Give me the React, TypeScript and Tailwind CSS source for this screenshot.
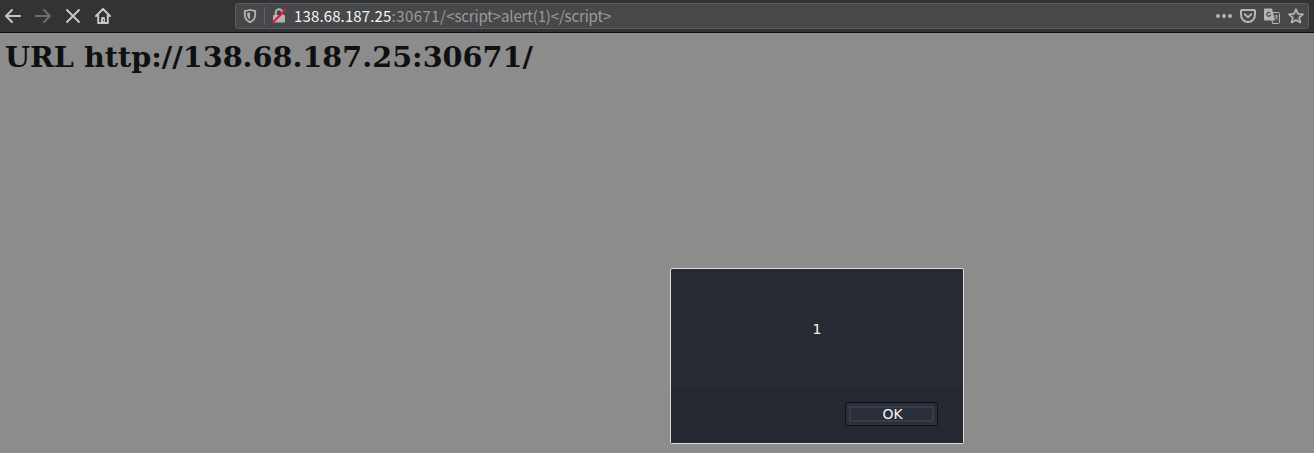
import React from "react";

const stroke = {
  fill: "none",
  stroke: "currentColor",
  strokeWidth: 2,
  strokeLinecap: "round" as const,
  strokeLinejoin: "round" as const,
};

function Icon({ children, className = "" }: { children: React.ReactNode; className?: string }) {
  return (
    <svg viewBox="0 0 16 16" className={`size-4 shrink-0 ${className}`} aria-hidden="true">
      {children}
    </svg>
  );
}

function NavButtons() {
  return (
    <nav className="flex w-[235px] shrink-0 items-center gap-[14px] pl-[5px] text-[#c6c6c6]">
      <Icon>
        <path {...stroke} d="M15 8H1.3M7 2L1 8l6 6" />
      </Icon>
      <Icon className="text-[#6c6d6e]">
        <path {...stroke} d="M1 8h13.7M9 2l6 6-6 6" />
      </Icon>
      <Icon>
        <path {...stroke} d="M2 2l12 12M14 2L2 14" />
      </Icon>
      <Icon>
        <path {...stroke} d="M1 8l7-7 7 7M3.2 7v8h9.6V7" />
        <path fill="currentColor" d="M6 15v-4.5C6 9.5 6.6 9 7.3 9h1.4c.7 0 1.3.5 1.3 1.5V15z" />
        <rect x="8" y="11.5" width="1" height="1.4" fill="#323334" />
      </Icon>
    </nav>
  );
}

function AddressBar() {
  return (
    <div className="mr-[5px] flex h-[26px] min-w-0 flex-1 items-center rounded-[3px] border border-[#5c5d5f] bg-[#474849] pr-[4px] pl-[6px] text-[#b4b4b4]">
      <Icon>
        <path {...stroke} strokeWidth={1.8} d="M8 1.800c1.600.7 3.400 1 5.200 1.100v3.600c0 3.500-1.800 6.300-5.200 7.700-3.400-1.400-5.200-4.200-5.200-7.700V2.900C4.600 2.800 6.400 2.500 8 1.800z" />
        <path fill="currentColor" d="M8 4.300v7.200C6.200 10.400 5.200 8.700 5.200 6.500V5C6.200 4.900 7.100 4.700 8 4.300z" />
      </Icon>
      <span className="ml-[6px] h-[18px] w-px bg-[#626270]" />
      <Icon className="ml-[6px]">
        <path {...stroke} d="M4.800 7V4.500a3.200 3.200 0 0 1 6.400 0V7" />
        <rect x="2" y="7" width="12" height="7.500" rx="1" fill="currentColor" />
        <path d="M1.800 14.500L14.500 1.800" stroke="#e4123f" strokeWidth="2" strokeLinecap="round" />
      </Icon>
      <span className="ml-[7px] flex-1 font-['Noto_Sans_CJK_SC',sans-serif] text-[15.04px] leading-5 whitespace-pre text-[#9b9b9b]">
        <span className="tracking-[0.12px] text-[#f4f4f4]">138.68.187.25</span>
        <span className="tracking-[0.43px]">:30671/</span>
        <span className="tracking-[-0.17px]">{"<script>alert(1)</script>"}</span>
      </span>
      <div className="flex items-center gap-2">
        <Icon>
          <circle cx="2" cy="8" r="2" fill="currentColor" />
          <circle cx="8" cy="8" r="2" fill="currentColor" />
          <circle cx="14" cy="8" r="2" fill="currentColor" />
        </Icon>
        <Icon>
          <path {...stroke} d="M2 2h12c.6 0 1 .4 1 1v4a7 7 0 0 1-14 0V3c0-.6.4-1 1-1z" />
          <path {...stroke} d="M4.700 6.200L8 9.400l3.300-3.200" />
        </Icon>
        <Icon>
          <path d="M7 4.500h7.500c.5 0 1 .4 1 1v9c0 .5-.4 1-1 1H8.500z" fill="#4b4c4e" stroke="currentColor" />
          <path d="M1 .5h6.200c.5 0 .8.300 1 .8L11 12.500H1c-.6 0-1-.4-1-1v-10c0-.6.4-1 1-1z" fill="currentColor" />
          <path d="M6.200 5a2 2 0 1 0 .3 2.300H4.800" fill="none" stroke="#515254" strokeWidth="1.100" />
          <path d="M10.500 8h3.500M12.200 7v1M13.300 8c-.3 1.700-.9 2.500-1.800 3.300M11.500 9.500c.5.900 1.100 1.500 2 2" fill="none" stroke="currentColor" strokeWidth=".9" />
        </Icon>
        <Icon>
          <path {...stroke} strokeWidth={1.800} d="M8 1.300l2 4.500 4.900.5-3.700 3.300 1.100 4.900L8 12l-4.300 2.500 1.100-4.900L1.100 6.300 6 5.800z" />
        </Icon>
      </div>
    </div>
  );
}

function AlertDialog() {
  return (
    <div
      role="alertdialog"
      aria-label="Alert"
      className="absolute top-[268px] left-[670px] flex h-[176px] w-[294px] flex-col rounded-[2px] border border-[#dcdcdc] bg-[#262a33]"
    >
      <p className="flex h-[120px] items-center justify-center font-['DejaVu_Sans',sans-serif] text-[14px] leading-4 text-[#f5f5f5]">
        1
      </p>
      <div className="flex flex-1 justify-end bg-[#242831] pt-[13px] pr-[25px]">
        <button className="flex h-6 w-[93px] rounded-[3px] border border-[#0e1014] bg-[#2b2f3a] p-[3px]">
          <span className="flex h-full w-full items-center justify-center border-2 border-[#383c47] pl-[2px] font-['DejaVu_Sans',sans-serif] text-[14px] leading-4 text-[#f5f5f5]">
            OK
          </span>
        </button>
      </div>
    </div>
  );
}

export default function App() {
  return (
    <div className="relative flex h-[453px] w-full flex-col overflow-hidden bg-[#8c8c8c]">
      <header className="flex h-[33px] shrink-0 items-center border-b border-[#0e0e0e] bg-[#323334]">
        <NavButtons />
        <AddressBar />
      </header>
      <main className="flex-1 px-[5px] pt-[7px]">
        <h1 className="font-['DejaVu_Serif',serif] text-[28.67px] leading-[35px] font-bold whitespace-nowrap text-[#101010]">
          URL http://138.68.187.25:30671/
        </h1>
      </main>
      <AlertDialog />
    </div>
  );
}
